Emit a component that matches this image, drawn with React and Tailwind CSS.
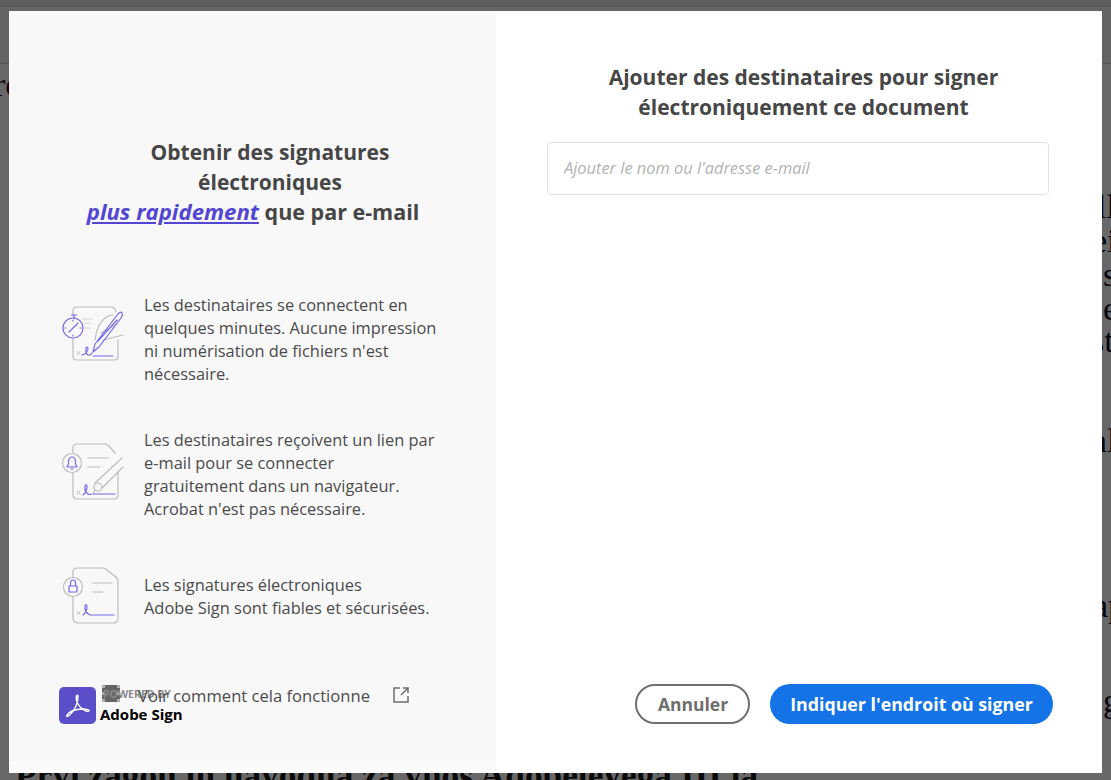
import React from "react";

const sans = { fontFamily: '"Open Sans", "Noto Sans", sans-serif' };
const gray = "#bcbcbc";
const violet = "#7468ea";

function Glyph({ children }) {
  return (
    <svg width="70" height="66" viewBox="0 0 70 66" fill="none" strokeLinecap="round" strokeLinejoin="round" strokeWidth="1.2">
      {children}
    </svg>
  );
}

function IconClock() {
  return (
    <Glyph>
      <path d="M16 15 V11 Q16 7 20 7 H54 Q58 7 59 12" stroke={gray} />
      <path d="M16 39 V56 Q16 60 20 60 H57 Q61 60 61 56 V40" stroke={gray} />
      <path d="M17 18 V15 M14.5 15 H19.5" stroke={violet} />
      <circle cx="16" cy="28" r="10" stroke={violet} />
      <path d="M16 28 L21 23 M16 28 L12 32 M16 20 V21 M8 28 H9 M23 28 H24 M16 35 V36" stroke={violet} />
      <path d="M25 19 H35 M27 23 H33 M28 28 H33" stroke="#d2d2d2" />
      <path d="M38 40 Q40 24 48 18 Q52 15 56 15" stroke={gray} />
      <path d="M46 40 L66 35 M44 33 L60 24" stroke={gray} />
      <path d="M36 52 L38 44 L61 14 Q64 11 65 13 Q66 15 64 18 L42 47 Z" stroke={violet} />
      <path d="M41 41 L60 20" stroke={violet} />
      <path d="M20 51.5 L23 54.5 M23 51.5 L20 54.5" stroke={gray} strokeWidth="1" />
      <path d="M25 55 Q30 54 31 49 Q31 46 29 48 Q28 53 31 55 Q33 56 35 53" stroke={violet} />
      <path d="M36 56 H56" stroke={violet} />
    </Glyph>
  );
}

function IconBell() {
  return (
    <Glyph>
      <path d="M16 13 V8 Q16 4 20 4 H48 Q50 4 52 6 L58 13" stroke={gray} />
      <path d="M16 33 V55 Q16 59 20 59 H57 Q61 59 61 55 V32" stroke={gray} />
      <circle cx="15" cy="23" r="9.5" stroke={gray} />
      <path d="M10 27 H20 L18.5 24 V21 Q18 17 15 17 Q12 17 11.5 21 V24 Z M14 29 H16" stroke={violet} />
      <path d="M31 18 H51 M31 27 H43" stroke={gray} />
      <path d="M65 18 L38 43 M66 27 L45 48" stroke={gray} />
      <circle cx="41" cy="47" r="4" stroke={gray} />
      <path d="M38 50 L36 54" stroke={gray} />
      <path d="M20 51 L23 54 M23 51 L20 54" stroke={gray} strokeWidth="1" />
      <path d="M26 55 Q30 52 30 46 Q29 43 28 46 Q27 51 31 54 Q33 55 34 54" stroke={violet} />
      <path d="M36 54 H58" stroke={violet} />
    </Glyph>
  );
}

function IconLock() {
  return (
    <Glyph>
      <path d="M16 17 V12 Q16 8 20 8 H46 Q48 8 50 10 L59 17 Q61 19 61 22 V58 Q61 63 56 63 H21 Q16 63 16 58 V37" stroke={gray} />
      <circle cx="16" cy="27" r="9.5" stroke={gray} />
      <path d="M12 26 H20 V32 H12 Z M13.5 26 V23 Q13.5 20 16 20 Q18.5 20 18.5 23 V26" stroke={violet} />
      <path d="M36 23 H55 M36 32 H46" stroke={gray} />
      <path d="M20 51.5 L23 54.5 M23 51.5 L20 54.5" stroke={gray} strokeWidth="1" />
      <path d="M26 55 Q30 52 30 46 Q29 43 28 46 Q27 52 33 55 H57" stroke={violet} />
    </Glyph>
  );
}

function AdobeMark() {
  return (
    <div className="flex h-[37px] w-[37px] items-center justify-center rounded-[5px] bg-[#5a4ec9]">
      <svg width="37" height="37" viewBox="0 0 37 37" fill="none">
        <path
          d="M8 28 Q7 30 9 29 Q13 27 17 19 Q19 14 19 9 Q18.5 7.5 17.5 9 Q16.5 12 19 17 Q22 22 27 24 Q30 25 30 23.5 Q29 22 24 22 Q18 22 13 24 Q9 26 8 28 Z"
          stroke="white"
          strokeWidth="1.4"
          strokeLinejoin="round"
        />
      </svg>
    </div>
  );
}

const features = [
  {
    icon: <IconClock />,
    iconClass: "mt-[7px]",
    rowClass: "",
    lines: ["Les destinataires se connectent en", "quelques minutes. Aucune impression", "ni numérisation de fichiers n'est", "nécessaire."],
  },
  {
    icon: <IconBell />,
    iconClass: "mt-[12px]",
    rowClass: "mt-[43px]",
    lines: ["Les destinataires reçoivent un lien par", "e-mail pour se connecter", "gratuitement dans un navigateur.", "Acrobat n'est pas nécessaire."],
  },
  {
    icon: <IconLock />,
    iconClass: "-mt-[13px]",
    rowClass: "mt-[53px]",
    lines: ["Les signatures électroniques", "Adobe Sign sont fiables et sécurisées."],
  },
];

// bits of the document page showing around the dialog
const behind = [
  ["left-[-6px] top-[68px]", "ro"],
  ["left-[1097px] top-[190px]", "ll"],
  ["left-[1092px] top-[224px]", "ei"],
  ["left-[1103px] top-[258px]", "s"],
  ["left-[1103px] top-[292px]", "e"],
  ["left-[1091px] top-[324px]", "st"],
  ["left-[1090px] top-[424px]", "nl"],
  ["left-[1093px] top-[589px]", "ap"],
  ["left-[1103px] top-[684px]", "g"],
];

export default function App() {
  return (
    <div className="relative h-[780px] w-[1111px] overflow-hidden bg-[#686868]" style={sans}>
      {/* page behind the overlay */}
      <div className="h-[6px] bg-[#5e5e5e]" />
      <div className="h-[58px] border-y border-[#555555] bg-[#646464]" />
      {behind.map(([pos, text]) => (
        <span
          key={pos}
          className={`absolute ${pos} text-[34px] leading-[34px] text-[#06060f]`}
          style={{ fontFamily: '"Liberation Serif", serif' }}
        >
          {text}
        </span>
      ))}
      <div
        className="absolute left-[15px] top-[756px] whitespace-nowrap text-[35.3px] font-bold leading-[40px] text-[#0b0b0b]"
        style={{ fontFamily: '"Liberation Serif", serif' }}
      >
        Prvi zagon in navodila za vnos Adobeleyega III la
      </div>

      {/* dialog */}
      <div className="absolute left-[9px] top-[11px] flex h-[762px] w-[1093px] bg-white">
        <div className="relative flex w-[487px] flex-col bg-[#fbfbfb]">
          <div className="flex h-[750px] flex-col bg-[#f8f8f8] pl-[50px]">
            <h2 className="mt-[126px] w-[422px] text-center text-[21px] font-bold leading-[30px] text-[#464646]">
              <span className="block">Obtenir des signatures</span>
              <span className="block">électroniques</span>
              <span className="block pr-[34px] text-[21.5px]">
                <a className="text-[22.2px] italic text-[#5246d3] underline">plus rapidement</a> que par e-mail
              </span>
            </h2>

            <ul className="mt-[66px] flex flex-col">
              {features.map((f) => (
                <li key={f.lines[0]} className={`flex items-start ${f.rowClass}`}>
                  <div className={`-ml-[2px] w-[87px] shrink-0 ${f.iconClass}`}>{f.icon}</div>
                  <p className="whitespace-nowrap text-[16.4px] leading-[23px] text-[#4b4b4b]">
                    {f.lines.map((l) => (
                      <span key={l} className="block">{l}</span>
                    ))}
                  </p>
                </li>
              ))}
            </ul>

            <div className="relative z-10 mt-[58px] flex items-center pl-[79px] text-[16.6px] leading-[24px] text-[#4b4b4b]">
              <span>Voir comment cela fonctionne</span>
              <svg className="ml-[22px] -mt-[3px]" width="18" height="18" viewBox="0 0 18 18" fill="none" stroke="#6e6e6e" strokeWidth="1.5">
                <path d="M8 2 H2 V16 H16 V10 M11 2 H16 V7 M16 2 L9 9" />
              </svg>
            </div>
          </div>

          {/* badge lying over the link */}
          <div className="absolute left-[50px] top-[676px] flex items-end gap-[4px]">
            <AdobeMark />
            <div className="relative h-[37px]">
              <span className="absolute left-[2px] top-[-2px] h-[17px] w-[18px] border-x-[3px] border-dotted border-[#b0b0b0] bg-[#666666]" />
              <span className="absolute left-[3px] top-[-1px] whitespace-nowrap text-[10.5px] font-bold leading-[16px] text-[#8a8a8a]">
                POWERED BY
              </span>
              <span className="block whitespace-nowrap pt-[17px] text-[15px] font-bold leading-[20px] text-black">
                Adobe Sign
              </span>
            </div>
          </div>
        </div>

        <div className="flex flex-1 flex-col pb-[49px] pl-[51px] pr-[53px] pt-[51px]">
          <h1 className="pl-[11px] text-center text-[21px] font-bold leading-[30px] text-[#464646]">
            Ajouter des destinataires pour signer
            <br />
            électroniquement ce document
          </h1>
          <input
            placeholder="Ajouter le nom ou l'adresse e-mail"
            className="mt-[20px] h-[53px] w-full rounded-[4px] border border-[#e2e2e2] bg-white px-[16px] pb-[2px] text-[16.4px] italic text-[#4b4b4b] outline-none placeholder:text-[#b3b3b3]"
          />
          <div className="mt-auto flex items-center justify-end gap-[20px]">
            <button className="h-[40px] w-[115px] rounded-full border-2 border-[#707070] pl-[1px] pt-[1px] text-[17.5px] font-bold text-[#6e6e6e]">
              Annuler
            </button>
            <button className="-mr-[4px] h-[40px] w-[283px] rounded-full bg-[#1473e6] text-[17.8px] font-bold text-white">
              Indiquer l'endroit où signer
            </button>
          </div>
        </div>
      </div>
    </div>
  );
}
